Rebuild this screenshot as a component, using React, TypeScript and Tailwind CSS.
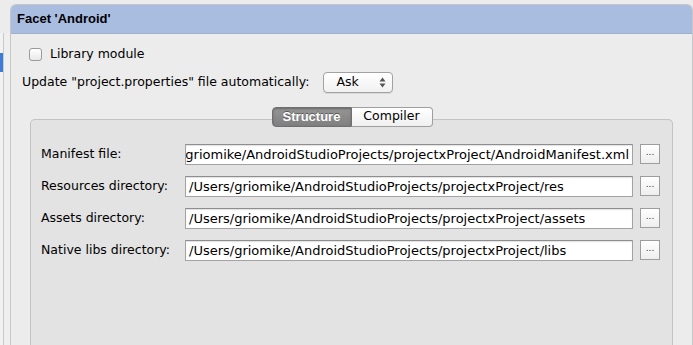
import React from "react";

const FONT = { fontFamily: '"DejaVu Sans", "Liberation Sans", sans-serif' };
const BOLD = { fontFamily: '"Liberation Sans", Arial, sans-serif' };

const ROWS = [
  { label: "Manifest file:", value: "/Users/griomike/AndroidStudioProjects/projectxProject/AndroidManifest.xml", end: true },
  { label: "Resources directory:", value: "/Users/griomike/AndroidStudioProjects/projectxProject/res", end: false },
  { label: "Assets directory:", value: "/Users/griomike/AndroidStudioProjects/projectxProject/assets", end: false },
  { label: "Native libs directory:", value: "/Users/griomike/AndroidStudioProjects/projectxProject/libs", end: false },
];

function UpDown() {
  return (
    <svg width="7" height="11" viewBox="0 0 7 11" className="block">
      <path d="M3.5 0.5 L6.5 4.5 L0.5 4.5 Z" fill="#555" />
      <path d="M3.5 10.5 L6.5 6.5 L0.5 6.5 Z" fill="#555" />
    </svg>
  );
}

function PathRow({ label, value, end }: { label: string; value: string; end: boolean }) {
  return (
    <div className="flex h-[21px] items-center">
      <div className="w-[144px] text-[12.5px] text-black">{label}</div>
      <div
        className={`flex h-[21px] w-[448px] items-center overflow-hidden border border-[#a3a3a3] border-t-[#8e8e8e] bg-white shadow-[inset_0_1px_1px_rgba(0,0,0,0.12)] ${
          end ? "justify-end pr-[3px]" : "justify-start pl-[3px]"
        }`}
      >
        <span className="whitespace-nowrap text-[13px] text-black">{value}</span>
      </div>
      <button className="ml-[7px] flex h-[20px] w-[20px] items-center justify-center border border-[#9d9d9d] bg-gradient-to-b from-white to-[#eeeeee] pb-[4px] text-[9px] text-[#333]">
        ...
      </button>
    </div>
  );
}

export default function App() {
  return (
    <div className="flex h-[345px] w-[693px] overflow-hidden bg-[#ececec]" style={FONT}>
      {/* left list strip */}
      <div className="flex w-[10px] flex-col">
        <div className="h-[33px]" />
        <div className="flex flex-1">
          <div className="w-[3px] bg-[#f2f2f2]">
            <div className="mt-[20px] h-[19px] w-[3px] bg-[#3d7bd8]" />
          </div>
          <div className="flex-1 border-l border-[#c9c9c9] bg-[#efefef]" />
        </div>
      </div>

      {/* facet panel */}
      <div className="mt-[4px] flex flex-1 flex-col overflow-hidden rounded-t-[6px] border border-b-0 border-[#c7c7c7] bg-[#ececec]">
        <div className="flex h-[29px] items-center border-b border-[#9fb0cc] bg-[#a9bde0] pl-[6px]">
          <span className="text-[13px] font-bold text-black" style={BOLD}>Facet 'Android'</span>
        </div>

        <div className="flex flex-1 flex-col">
          <div className="mt-[11px] flex items-center pl-[18px]">
            <div className="h-[13px] w-[13px] rounded-[3px] border border-[#9a9a9a] bg-gradient-to-b from-white to-[#e9e9e9]" />
            <span className="ml-[8px] text-[12.5px] text-black">Library module</span>
          </div>

          <div className="mt-[8px] flex items-center pl-[11px]">
            <span className="text-[12.5px] text-black">Update "project.properties" file automatically:</span>
            <div className="ml-[14px] flex h-[21px] w-[70px] items-center justify-between rounded-[4px] border border-[#a2a2a2] bg-gradient-to-b from-white to-[#f1f1f1] pl-[12px] pr-[6px] shadow-[0_1px_0_rgba(0,0,0,0.08)]">
              <span className="text-[12.5px] text-black">Ask</span>
              <UpDown />
            </div>
          </div>

          {/* tabs */}
          <div className="relative z-10 mt-[14px] flex justify-center pl-[1px]">
            <div className="flex h-[20px] w-[80px] items-center justify-center rounded-l-[4px] border border-[#6f6f6f] bg-gradient-to-b from-[#959595] to-[#7f7f7f] shadow-[inset_0_1px_2px_rgba(0,0,0,0.3)]">
              <span className="text-[13px] font-bold text-white [text-shadow:0_-1px_0_rgba(0,0,0,0.4)]" style={BOLD}>
                Structure
              </span>
            </div>
            <div className="flex h-[20px] w-[81px] items-center justify-center rounded-r-[4px] border border-l-0 border-[#9f9f9f] bg-gradient-to-b from-white to-[#f0f0f0]">
              <span className="text-[12.5px] text-black">Compiler</span>
            </div>
          </div>

          {/* group box */}
          <div className="-mt-[8px] ml-[19px] mr-[19px] flex flex-1 flex-col gap-[11px] rounded-t-[5px] border border-b-0 border-[#c3c3c3] bg-[#e3e3e3] pl-[10px] pt-[24px]">
            {ROWS.map((r) => (
              <PathRow key={r.label} label={r.label} value={r.value} end={r.end} />
            ))}
          </div>
        </div>
      </div>
    </div>
  );
}
